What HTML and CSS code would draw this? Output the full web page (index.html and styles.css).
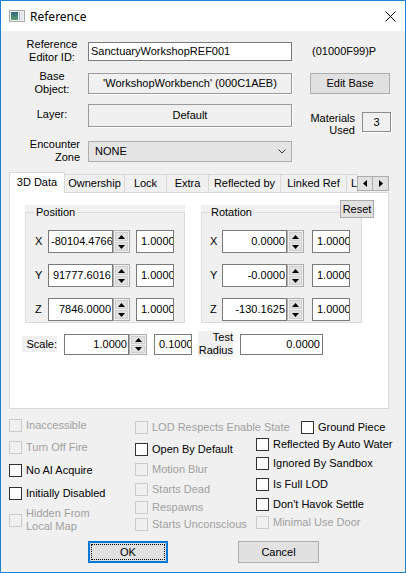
FILE: index.html
```html
<!DOCTYPE html>
<html lang="en">
<head>
    <meta charset="UTF-8">
    <meta name="viewport" content="width=device-width, initial-scale=1.0">
    <title>Reference</title>
    <link rel="stylesheet" href="styles.css">
</head>
<body>
    <div class="window">
        <div class="titlebar">
            <svg class="app-icon" width="16" height="12" viewBox="0 0 16 12">
                <defs>
                    <linearGradient id="g" x1="0" y1="0" x2="0" y2="1">
                        <stop offset="0" stop-color="#35657f"/>
                        <stop offset="1" stop-color="#5c9f6c"/>
                    </linearGradient>
                </defs>
                <rect x="0.5" y="0.5" width="15" height="11" fill="#f2f2f2" stroke="#a9a9a9"/>
                <rect x="2" y="2" width="7" height="8" fill="url(#g)"/>
                <rect x="10" y="2" width="1" height="8" fill="#93b9d8"/>
                <rect x="12" y="2" width="2" height="8" fill="#dde4ec"/>
            </svg>
            <span class="title">Reference</span>
            <svg class="close" width="11" height="11" viewBox="0 0 11 11">
                <path d="M0.5 0.5 L10.5 10.5 M10.5 0.5 L0.5 10.5" stroke="#000" stroke-width="1"/>
            </svg>
        </div>

        <div class="row row-id">
            <div class="lbl">Reference<br>Editor ID:</div>
            <div class="edit wide">SanctuaryWorkshopREF001</div>
            <div class="formid">(01000F99)P</div>
        </div>

        <div class="row row-base">
            <div class="lbl">Base<br>Object:</div>
            <div class="static wide">'WorkshopWorkbench' (000C1AEB)</div>
            <button class="btn edit-base">Edit Base</button>
        </div>

        <div class="row row-layer">
            <div class="lbl">Layer:</div>
            <div class="static wide tall">Default</div>
            <div class="materials">
                <div class="mat-lbl">Materials<br>Used</div>
                <div class="mat-box">3</div>
            </div>
        </div>

        <div class="row row-zone">
            <div class="lbl lbl-right">Encounter<br>Zone</div>
            <div class="combo wide">
                <span>NONE</span>
                <svg width="8" height="5" viewBox="0 0 8 5"><path d="M0.5 0.5 L4 4 L7.5 0.5" fill="none" stroke="#333"/></svg>
            </div>
        </div>

        <div class="tabs">
            <div class="tabstrip">
                <div class="tab active t-3d">3D Data</div>
                <div class="tab t-own">Ownership</div>
                <div class="tab t-lock">Lock</div>
                <div class="tab t-extra">Extra</div>
                <div class="tab t-refl">Reflected by</div>
                <div class="tab t-linked">Linked Ref</div>
                <div class="tab t-more">L</div>
                <div class="tab-arrows">
                    <span class="arrow-btn"><svg width="4" height="7" viewBox="0 0 4 7"><path d="M4 0 L0 3.5 L4 7 Z" fill="#000"/></svg></span>
                    <span class="arrow-btn"><svg width="4" height="7" viewBox="0 0 4 7"><path d="M0 0 L4 3.5 L0 7 Z" fill="#000"/></svg></span>
                </div>
            </div>

            <div class="panel">
                <button class="btn reset">Reset</button>
                <div class="groups">
                    <div class="group">
                        <div class="group-box">
                            <span class="legend">Position</span>
                            <div class="axes">
                                <div class="axis">
                                    <span class="axis-lbl">X</span>
                                    <div class="edit num">-80104.4766</div>
                                    <div class="spin">
                                        <span class="spin-btn"><svg width="7" height="4" viewBox="0 0 7 4"><path d="M0 4 L3.5 0 L7 4 Z" fill="#000"/></svg></span>
                                        <span class="spin-btn"><svg width="7" height="4" viewBox="0 0 7 4"><path d="M0 0 L3.5 4 L7 0 Z" fill="#000"/></svg></span>
                                    </div>
                                    <div class="edit scale-box">1.0000</div>
                                </div>
                                <div class="axis">
                                    <span class="axis-lbl">Y</span>
                                    <div class="edit num">91777.6016</div>
                                    <div class="spin">
                                        <span class="spin-btn"><svg width="7" height="4" viewBox="0 0 7 4"><path d="M0 4 L3.5 0 L7 4 Z" fill="#000"/></svg></span>
                                        <span class="spin-btn"><svg width="7" height="4" viewBox="0 0 7 4"><path d="M0 0 L3.5 4 L7 0 Z" fill="#000"/></svg></span>
                                    </div>
                                    <div class="edit scale-box">1.0000</div>
                                </div>
                                <div class="axis">
                                    <span class="axis-lbl">Z</span>
                                    <div class="edit num">7846.0000</div>
                                    <div class="spin">
                                        <span class="spin-btn"><svg width="7" height="4" viewBox="0 0 7 4"><path d="M0 4 L3.5 0 L7 4 Z" fill="#000"/></svg></span>
                                        <span class="spin-btn"><svg width="7" height="4" viewBox="0 0 7 4"><path d="M0 0 L3.5 4 L7 0 Z" fill="#000"/></svg></span>
                                    </div>
                                    <div class="edit scale-box">1.0000</div>
                                </div>
                            </div>
                        </div>
                    </div>

                    <div class="group group-rot">
                        <div class="group-box">
                            <span class="legend">Rotation</span>
                            <div class="axes">
                                <div class="axis">
                                    <span class="axis-lbl">X</span>
                                    <div class="edit num">0.0000</div>
                                    <div class="spin">
                                        <span class="spin-btn"><svg width="7" height="4" viewBox="0 0 7 4"><path d="M0 4 L3.5 0 L7 4 Z" fill="#000"/></svg></span>
                                        <span class="spin-btn"><svg width="7" height="4" viewBox="0 0 7 4"><path d="M0 0 L3.5 4 L7 0 Z" fill="#000"/></svg></span>
                                    </div>
                                    <div class="edit scale-box">1.0000</div>
                                </div>
                                <div class="axis">
                                    <span class="axis-lbl">Y</span>
                                    <div class="edit num">-0.0000</div>
                                    <div class="spin">
                                        <span class="spin-btn"><svg width="7" height="4" viewBox="0 0 7 4"><path d="M0 4 L3.5 0 L7 4 Z" fill="#000"/></svg></span>
                                        <span class="spin-btn"><svg width="7" height="4" viewBox="0 0 7 4"><path d="M0 0 L3.5 4 L7 0 Z" fill="#000"/></svg></span>
                                    </div>
                                    <div class="edit scale-box">1.0000</div>
                                </div>
                                <div class="axis">
                                    <span class="axis-lbl">Z</span>
                                    <div class="edit num">-130.1625</div>
                                    <div class="spin">
                                        <span class="spin-btn"><svg width="7" height="4" viewBox="0 0 7 4"><path d="M0 4 L3.5 0 L7 4 Z" fill="#000"/></svg></span>
                                        <span class="spin-btn"><svg width="7" height="4" viewBox="0 0 7 4"><path d="M0 0 L3.5 4 L7 0 Z" fill="#000"/></svg></span>
                                    </div>
                                    <div class="edit scale-box">1.0000</div>
                                </div>
                            </div>
                        </div>
                    </div>
                </div>

                <div class="scale-row">
                    <div class="tag tag-scale">Scale:</div>
                    <div class="edit num num-scale">1.0000</div>
                    <div class="spin spin-sm">
                        <span class="spin-btn"><svg width="7" height="4" viewBox="0 0 7 4"><path d="M0 4 L3.5 0 L7 4 Z" fill="#000"/></svg></span>
                        <span class="spin-btn"><svg width="7" height="4" viewBox="0 0 7 4"><path d="M0 0 L3.5 4 L7 0 Z" fill="#000"/></svg></span>
                    </div>
                    <div class="edit scale-box sb-sm">0.1000</div>
                    <div class="tag tag-radius">Test<br>Radius</div>
                    <div class="edit num radius">0.0000</div>
                </div>
            </div>
        </div>

        <div class="checks">
            <div class="col col1">
                <div class="cb off"><span class="box"></span><span>Inaccessible</span></div>
                <div class="cb off"><span class="box"></span><span>Turn Off Fire</span></div>
                <div class="cb"><span class="box"></span><span>No AI Acquire</span></div>
                <div class="cb"><span class="box"></span><span>Initially Disabled</span></div>
                <div class="cb off"><span class="box"></span><span>Hidden From<br>Local Map</span></div>
            </div>
            <div class="col col2">
                <div class="cb off"><span class="box"></span><span>LOD Respects Enable State</span></div>
                <div class="cb"><span class="box"></span><span>Open By Default</span></div>
                <div class="cb off"><span class="box"></span><span>Motion Blur</span></div>
                <div class="cb off"><span class="box"></span><span>Starts Dead</span></div>
                <div class="cb off"><span class="box"></span><span>Respawns</span></div>
                <div class="cb off"><span class="box"></span><span>Starts Unconscious</span></div>
            </div>
            <div class="col col3">
                <div class="cb"><span class="box"></span><span>Ground Piece</span></div>
                <div class="cb"><span class="box"></span><span>Reflected By Auto Water</span></div>
                <div class="cb"><span class="box"></span><span>Ignored By Sandbox</span></div>
                <div class="cb"><span class="box"></span><span>Is Full LOD</span></div>
                <div class="cb"><span class="box"></span><span>Don't Havok Settle</span></div>
                <div class="cb off"><span class="box"></span><span>Minimal Use Door</span></div>
            </div>
        </div>

        <div class="buttons">
            <button class="btn ok">OK</button>
            <button class="btn cancel">Cancel</button>
        </div>
    </div>
</body>
</html>
```

FILE: styles.css
```css
* {
    box-sizing: border-box;
}
html, body {
    margin: 0;
    overflow: hidden;
}
body {
    font-family: "Liberation Sans", Arial, sans-serif;
    font-size: 11px;
    line-height: 13px;
    color: #000;
    background: #fff;
}
.window {
    width: 406px;
    height: 573px;
    border: 1px solid #1883d7;
    background: #f0f0f0;
    overflow: hidden;
}

/* title bar */
.titlebar {
    height: 30px;
    background: #fff;
    display: flex;
    align-items: center;
    padding: 0 9px 0 8px;
}
.title {
    font-family: "Noto Sans", "Open Sans", sans-serif;
    font-size: 12px;
    margin-left: 5px;
}
.close {
    margin-left: auto;
}

/* top form rows */
.row {
    display: flex;
    align-items: center;
    height: 26px;
}
.row-id {
    margin-top: 7px;
}
.row-base {
    margin-top: 6px;
}
.row-layer {
    margin-top: 7px;
    height: 25px;
}
.row-zone {
    margin-top: 10px;
}
.lbl {
    width: 87px;
    padding: 0 4px 0 19px;
    text-align: center;
}
.row-layer .lbl {
    margin-top: -3px;
}
.lbl-right {
    text-align: right;
    padding-right: 8px;
}
.wide {
    width: 204px;
}
.edit {
    background: #fff;
    border: 1px solid #7a7a7a;
    height: 19px;
    line-height: 17px;
    padding: 0 2px;
    white-space: nowrap;
    overflow: hidden;
}
.static {
    height: 21px;
    line-height: 19px;
    text-align: center;
    background: #f0f0f0;
    border: 1px solid #9a9a9a;
    box-shadow: 1px 1px 0 #fff;
}
.static.tall {
    height: 23px;
    line-height: 21px;
}
.formid {
    margin-left: 20px;
}
.btn {
    font-family: "Liberation Sans", Arial, sans-serif;
    font-size: 11px;
    color: #000;
    background: #e1e1e1;
    border: 1px solid #adadad;
    padding: 0;
    margin: 0;
}
.edit-base {
    margin-left: 18px;
    width: 80px;
    height: 21px;
}
.materials {
    margin-left: auto;
    margin-right: 14px;
    align-self: flex-start;
    margin-top: 9px;
    display: flex;
    gap: 7px;
}
.mat-lbl {
    text-align: right;
    line-height: 12px;
}
.mat-box {
    width: 29px;
    height: 20px;
    line-height: 18px;
    text-align: center;
    border: 1px solid #8e8e8e;
    box-shadow: 1px 1px 0 #fff;
}
.combo {
    height: 21px;
    background: #e5e5e5;
    border: 1px solid #adadad;
    display: flex;
    align-items: center;
    justify-content: space-between;
    padding: 0 5px 0 6px;
}

/* tabs */
.tabs {
    margin: 8px 0 0 8px;
    width: 380px;
}
.tabstrip {
    display: flex;
    align-items: flex-end;
    height: 20px;
    position: relative;
}
.tab {
    height: 18px;
    line-height: 17px;
    border: 1px solid #d9d9d9;
    border-bottom: none;
    margin-left: -1px;
    text-align: center;
    white-space: nowrap;
    overflow: hidden;
    background: #f0f0f0;
}
.tab.active {
    height: 21px;
    line-height: 19px;
    margin-left: 0;
    margin-bottom: -1px;
    background: #fff;
    position: relative;
    z-index: 2;
}
.t-3d { width: 56px; }
.t-own { width: 61px; }
.t-lock { width: 43px; }
.t-extra { width: 43px; }
.t-refl { width: 73px; }
.t-linked { width: 67px; }
.t-more {
    width: 12px;
    text-align: left;
    padding-left: 4px;
}
.tab-arrows {
    position: absolute;
    right: 0;
    top: 4px;
    display: flex;
    background: #f0f0f0;
}
.arrow-btn {
    width: 16px;
    height: 15px;
    border: 1px solid #adadad;
    background: #e1e1e1;
    display: flex;
    align-items: center;
    justify-content: center;
}
.arrow-btn + .arrow-btn {
    margin-left: -1px;
    width: 17px;
}
.panel {
    height: 217px;
    background: #fff;
    border: 1px solid #d9d9d9;
    position: relative;
    padding: 12px 0 0 15px;
}
.reset {
    position: absolute;
    left: 330px;
    top: 7px;
    width: 34px;
    height: 18px;
    z-index: 1;
}

/* group boxes */
.groups {
    display: flex;
    gap: 16px;
}
.group {
    width: 160px;
    height: 118px;
    background: #f0f0f0;
    padding-top: 7px;
}
.group-rot {
    width: 161px;
}
.group-box {
    height: 111px;
    border: 1px solid #dcdcdc;
    padding-left: 9px;
}
.group-rot .group-box {
    padding-left: 8px;
}
.legend {
    display: inline-block;
    margin-top: -7px;
    padding: 0 1px;
    background: #f0f0f0;
    vertical-align: top;
}
.axes {
    display: flex;
    flex-direction: column;
    gap: 11px;
    margin-top: 4px;
}
.axis {
    display: flex;
    align-items: center;
    height: 23px;
}
.axis-lbl {
    width: 13px;
}
.group-rot .axis-lbl {
    width: 12px;
}
.num {
    width: 65px;
    height: 23px;
    line-height: 21px;
    text-align: right;
    padding-right: 1px;
}
.spin {
    width: 17px;
    height: 23px;
    border: 1px solid #adadad;
    background: #f0f0f0;
    display: flex;
    flex-direction: column;
    padding: 1px;
    gap: 1px;
}
.spin-btn {
    flex: 1;
    background: #e1e1e1;
    border: 1px solid #cfcfcf;
    display: flex;
    align-items: center;
    justify-content: center;
}
.scale-box {
    width: 38px;
    height: 23px;
    line-height: 21px;
    margin-left: 6px;
    padding-left: 4px;
    padding-right: 0;
}
.group-rot .scale-box {
    margin-left: 8px;
}

/* scale row */
.scale-row {
    display: flex;
    align-items: center;
    height: 26px;
    margin: 8px 0 0 -3px;
}
.tag {
    background: #f0f0f0;
    text-align: right;
    width: 35px;
}
.tag-scale {
    height: 16px;
    line-height: 16px;
}
.tag-radius {
    height: 26px;
    margin-left: 6px;
}
.num-scale {
    height: 21px;
    line-height: 19px;
    margin-left: 7px;
}
.spin-sm {
    height: 21px;
    width: 18px;
}
.sb-sm {
    height: 21px;
    line-height: 19px;
    margin-left: 7px;
}
.radius {
    width: 83px;
    height: 21px;
    line-height: 19px;
    margin-left: 7px;
    padding-right: 2px;
}

/* check boxes */
.checks {
    display: flex;
    height: 132px;
}
.col {
    display: flex;
    flex-direction: column;
}
.col1 {
    width: 134px;
    padding-left: 8px;
}
.col2 {
    width: 121px;
}
.cb {
    display: flex;
    align-items: center;
    gap: 4px;
    white-space: nowrap;
}
.box {
    width: 13px;
    height: 13px;
    flex: none;
    border: 1px solid #333;
    background: #fff;
}
.cb.off {
    color: #a0a0a0;
}
.cb.off .box {
    border-color: #cccccc;
    background: #f0f0f0;
}
.col1 .cb:nth-child(1) { margin-top: 10px; }
.col1 .cb:nth-child(2) { margin-top: 9px; }
.col1 .cb:nth-child(3) { margin-top: 10px; }
.col1 .cb:nth-child(4) { margin-top: 10px; }
.col1 .cb:nth-child(5) { margin-top: 7px; }
.col2 .cb:nth-child(1) { margin-top: 12px; }
.col2 .cb:nth-child(2) { margin-top: 9px; }
.col2 .cb:nth-child(3) { margin-top: 7px; }
.col2 .cb:nth-child(4) { margin-top: 7px; }
.col2 .cb:nth-child(5) { margin-top: 5px; }
.col2 .cb:nth-child(6) { margin-top: 4px; }
.col3 .cb:nth-child(1) { margin-top: 12px; margin-left: 45px; }
.col3 .cb:nth-child(2) { margin-top: 4px; }
.col3 .cb:nth-child(3) { margin-top: 6px; }
.col3 .cb:nth-child(4) { margin-top: 8px; }
.col3 .cb:nth-child(5) { margin-top: 7px; }
.col3 .cb:nth-child(6) { margin-top: 5px; }

/* dialog buttons */
.buttons {
    display: flex;
    height: 22px;
}
.ok {
    margin-left: 87px;
    width: 80px;
    height: 22px;
    border: 2px solid #0078d7;
    outline: 1px dotted #000;
    outline-offset: -4px;
}
.cancel {
    margin-left: 70px;
    width: 81px;
    height: 22px;
}
```
